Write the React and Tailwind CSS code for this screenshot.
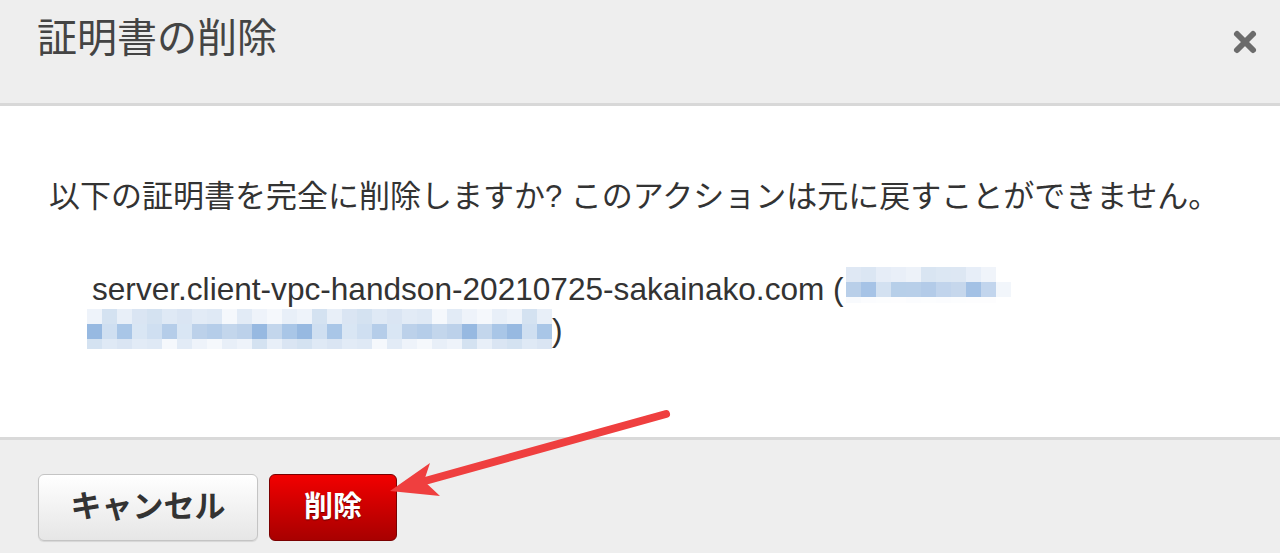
import React from "react";

const FONT = "font-['Liberation_Sans','Noto_Sans_CJK_JP',sans-serif]";

// mosaic rows used to hide the certificate id
const LINE1 = [
  ["#dfe8f4", "#dbe6f3", "#e6edf7", "#e9eff8", "#edf2f9", "#d9e5f2", "#dce7f3", "#dde7f3", "#e7eef8", "#f0f4fa"],
  ["#b9cfe9", "#a6c3e6", "#d3e1f1", "#b7cfe9", "#b8cfe9", "#b3cbe8", "#c1d4ec", "#c6d7ec", "#a3c1e5", "#c2d5ed", "#f2f6fb"],
  ["#f8fafd", "#fbfcfe", "#fcfdfe", "#fdfdfe", "#fbfcfe", "#fcfdfe", "#fbfcfe", "#fcfdfe", "#fdfdfe", "#fdfdfe"],
];

const mid = ["#c3d6ec", "#b5cde9", "#cfdff1", "#97b9e1", "#bcd1ea", "#d9e6f4", "#a9c6e7"];
const light = ["#eef3fa", "#e2ebf6", "#dae5f3", "#e8eff8", "#f5f8fc", "#dfe9f5", "#d4e2f1"];
const LINE2 = [0, 1, 2].map((r) =>
  Array.from({ length: 31 }, (_, i) => {
    const v = (i * 5 + r * 3 + ((i * i) % 4)) % 7;
    return r === 1 ? mid[v] : light[v];
  })
);

const Mosaic = ({ rows, heights }) => (
  <div className="flex flex-col">
    {rows.map((row, r) => (
      <div key={r} className="flex" style={{ height: heights[r] }}>
        {row.map((c, i) => (
          <div key={i} className="w-[15px]" style={{ background: c }} />
        ))}
      </div>
    ))}
  </div>
);

const App = () => {
  return (
    <div className={`relative w-[1280px] h-[553px] overflow-hidden bg-white ${FONT}`}>
      {/* header */}
      <div className="h-[106px] bg-[#eeeeee] border-b-[3px] border-[#d8d8d8] flex justify-between pl-[37px] pr-[22px]">
        <h1 className="pt-[18px] text-[40px] leading-[40px] text-[#444] font-normal">証明書の削除</h1>
        <div className="pt-[29px]">
          <svg width="26" height="26" viewBox="0 0 26 26">
            <path d="M5 5 L21 21 M21 5 L5 21" stroke="#6b6b6b" strokeWidth="6" strokeLinecap="round" />
          </svg>
        </div>
      </div>

      {/* body */}
      <div className="h-[334px] border-b-[3px] border-[#d9d9d9] pt-[71px]">
        <p className="pl-[49px] text-[31px] leading-[40px] text-[#333] whitespace-nowrap">
          以下の証明書を完全に削除しますか? このアクションは元に戻すことができません。
        </p>
        <div className="mt-[52px] pl-[87px] text-[31.6px] text-[#333]">
          <div className="flex items-start h-[41px]">
            <span className="pl-[5px] leading-[41px]">server.client-vpc-handson-20210725-sakainako.com (</span>
            <div className="ml-[2px] mt-[-2px]">
              <Mosaic rows={LINE1} heights={[15, 15, 6]} />
            </div>
          </div>
          <div className="flex items-start">
            <div className="mt-[-1px]">
              <Mosaic rows={LINE2} heights={[15, 15, 10]} />
            </div>
            <span className="leading-[41px]">)</span>
          </div>
        </div>
      </div>

      {/* footer */}
      <div className="h-[113px] bg-[#eeeeee] pt-[34px] pl-[38px] flex gap-[11px] items-start">
        <button className="w-[220px] h-[67px] rounded-[6px] border border-[#c4c4c4] bg-gradient-to-b from-white to-[#e6e6e6] text-[31px] font-bold text-[#333] shadow-[0_1px_1px_rgba(0,0,0,0.1)]">
          キャンセル
        </button>
        <button className="w-[128px] h-[67px] rounded-[6px] border border-[#7a0000] bg-gradient-to-b from-[#f20000] to-[#a80000] text-[29px] font-bold text-white [text-shadow:0_1px_1px_rgba(0,0,0,0.5)]">
          削除
        </button>
      </div>

      {/* annotation arrow */}
      <svg className="absolute left-0 top-0 pointer-events-none" width="1280" height="553">
        <line x1="666" y1="414" x2="425" y2="481" stroke="#ef3f3f" strokeWidth="8" strokeLinecap="round" />
        <polygon points="390,491 430,463 424,481 440,496" fill="#ef3f3f" />
      </svg>
    </div>
  );
};

export default App;
